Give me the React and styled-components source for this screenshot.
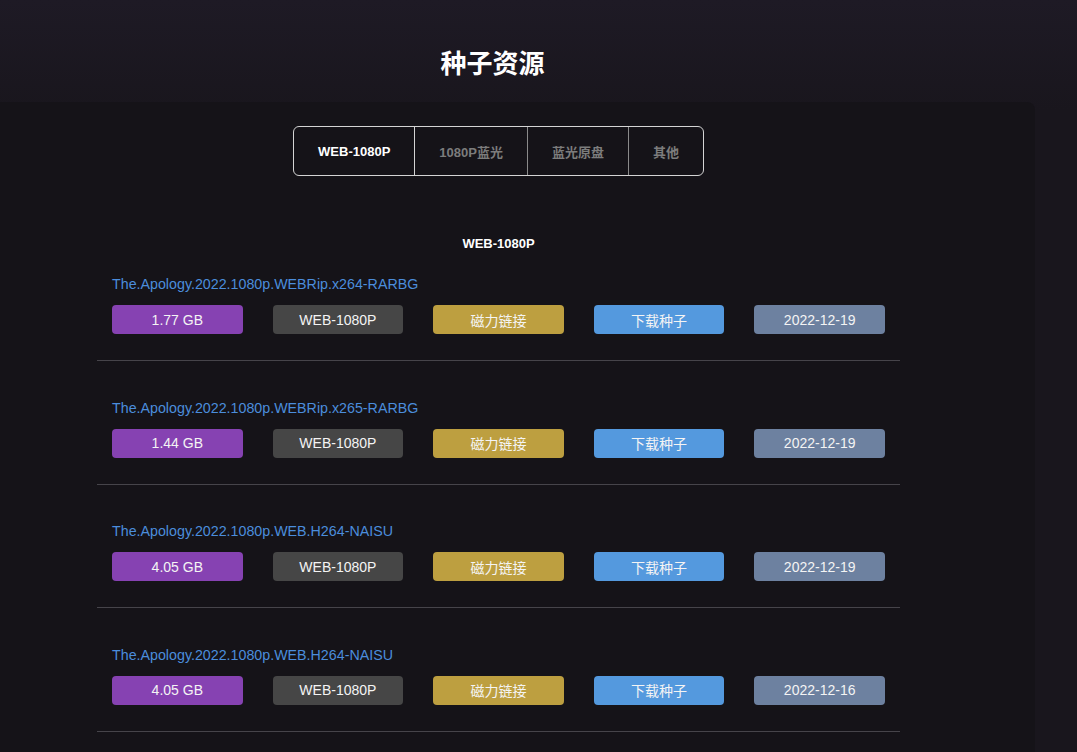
import React, { useState } from 'react';
import styled, { createGlobalStyle } from 'styled-components';

const GlobalStyle = createGlobalStyle`
    html, body {
        margin: 0;
        padding: 0;
    }

    body {
        min-height: 100vh;
        background: linear-gradient(#1e1a25 0px, #19161d 110px, #19161d 100%);
        font-family: "Liberation Sans", Arial, "Noto Sans CJK SC", sans-serif;
        color: #fff;
    }
`;

const Page = styled.div`
    min-height: 100vh;
`;

const Title = styled.h1`
    margin: 0 0 0 97px;
    padding: 46px 12px 20px 0;
    width: 803px;
    box-sizing: border-box;

    font-size: 26px;
    line-height: 36px;
    font-weight: bold;
    text-align: center;
    color: #fff;
`;

const Panel = styled.main`
    width: 1035px;
    min-height: 650px;
    padding-top: 24px;

    border-radius: 0 8px 0 0;

    background-color: #151318;
    box-sizing: border-box;
`;

const Column = styled.div`
    width: 803px;
    margin-left: 97px;
`;

const TabsRow = styled.div`
    display: flex;
    justify-content: center;
`;

const Tabs = styled.div`
    display: flex;

    border: 1px solid #d4d4d4;
    border-radius: 6px;

    overflow: hidden;
`;

const Tab = styled.button`
    height: 48px;
    padding: 0 24px;

    border: none;
    border-left: 1px solid ${p => (p.$bright ? '#d4d4d4' : '#8a8a8a')};

    background-color: transparent;

    font-family: inherit;
    font-size: 13px;
    font-weight: bold;
    color: ${p => (p.$active ? '#ffffff' : '#7c7c7c')};

    cursor: pointer;

    &:first-child {
        border-left: none;
    }
`;

const SectionTitle = styled.h2`
    margin: 58px 0 20px;

    font-size: 13px;
    line-height: 20px;
    font-weight: bold;
    text-align: center;
    color: #fff;
`;

const Torrents = styled.ul`
    margin: 0;
    padding: 0;

    list-style: none;
`;

const Torrent = styled.li`
    padding: 0 15px 26px;

    border-bottom: 1px solid #46444a;

    & + & {
        padding-top: 36.67px;
    }
`;

const Name = styled.a`
    display: block;

    font-size: 14.25px;
    line-height: 20px;
    color: #4b8ddc;
    text-decoration: none;
`;

const Tags = styled.div`
    display: flex;
    gap: 30px;

    margin-top: 11px;
`;

const Tag = styled.a`
    flex: 1;

    height: 29px;

    display: flex;
    align-items: center;
    justify-content: center;

    border-radius: 4px;

    background-color: ${p => p.$bg};

    font-size: 14px;
    color: #f4f4f4;
    text-decoration: none;
`;

const tabs = ['WEB-1080P', '1080P蓝光', '蓝光原盘', '其他'];

const torrents = [
    { name: 'The.Apology.2022.1080p.WEBRip.x264-RARBG', size: '1.77 GB', date: '2022-12-19' },
    { name: 'The.Apology.2022.1080p.WEBRip.x265-RARBG', size: '1.44 GB', date: '2022-12-19' },
    { name: 'The.Apology.2022.1080p.WEB.H264-NAISU', size: '4.05 GB', date: '2022-12-19' },
    { name: 'The.Apology.2022.1080p.WEB.H264-NAISU', size: '4.05 GB', date: '2022-12-16' },
];

const App = () => {
    const [active, setActive] = useState(0);

    return (
        <Page>
            <GlobalStyle />
            <Title>种子资源</Title>

            <Panel>
                <Column>
                    <TabsRow>
                        <Tabs>
                            {tabs.map((t, i) => (
                                <Tab
                                    key={t}
                                    $active={i === active}
                                    $bright={i - 1 === active}
                                    onClick={() => setActive(i)}
                                >
                                    {t}
                                </Tab>
                            ))}
                        </Tabs>
                    </TabsRow>

                    <SectionTitle>{tabs[active]}</SectionTitle>

                    <Torrents>
                        {torrents.map((el, i) => (
                            <Torrent key={i}>
                                <Name href="#">{el.name}</Name>
                                <Tags>
                                    <Tag $bg="#8642b2">{el.size}</Tag>
                                    <Tag $bg="#464646">WEB-1080P</Tag>
                                    <Tag $bg="#bd9f40" href="#">磁力链接</Tag>
                                    <Tag $bg="#5499de" href="#">下载种子</Tag>
                                    <Tag $bg="#6d81a0">{el.date}</Tag>
                                </Tags>
                            </Torrent>
                        ))}
                    </Torrents>
                </Column>
            </Panel>
        </Page>
    );
};

export default App;
